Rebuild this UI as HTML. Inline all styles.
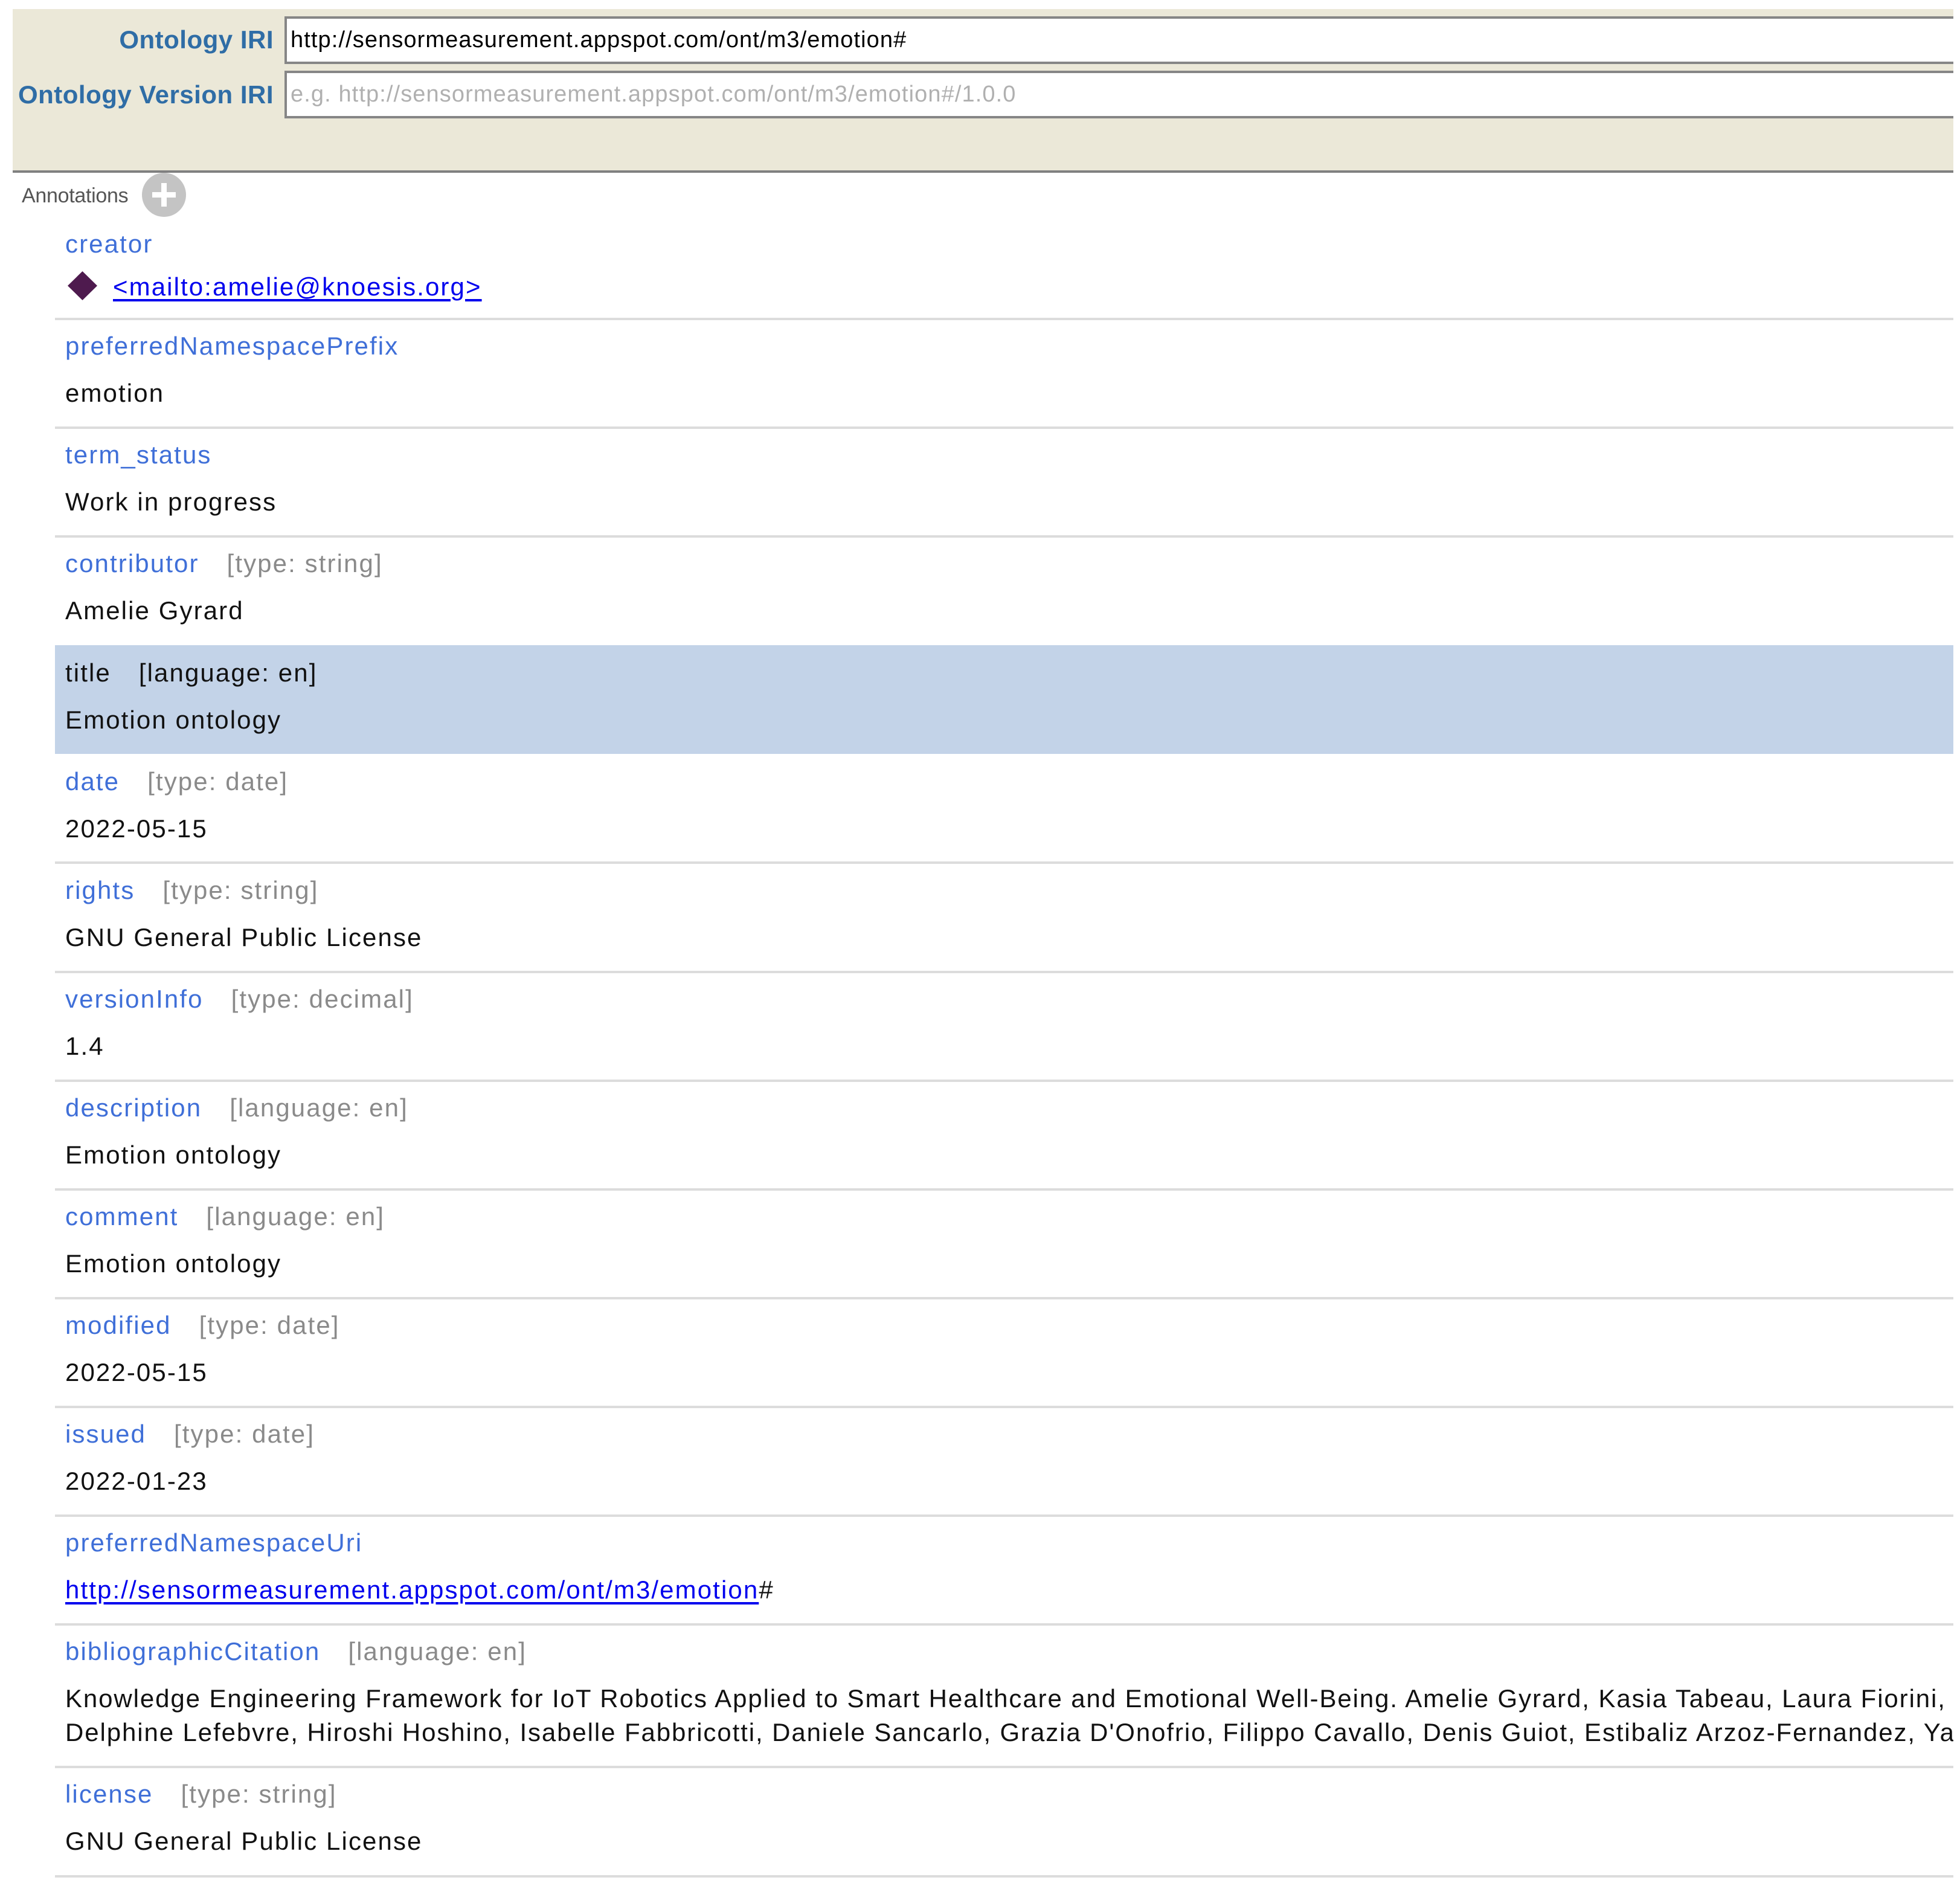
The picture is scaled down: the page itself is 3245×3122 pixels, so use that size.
<!DOCTYPE html>
<html><head><meta charset="utf-8"><style>
html,body{margin:0;padding:0;background:#fff;width:3245px;height:3122px;overflow:hidden;position:relative;font-family:"Liberation Sans",Arial,sans-serif}
.panel{position:absolute;left:21px;top:15px;width:3213px;height:267px;background:#ebe8d8;border-bottom:4px solid #808080}
.lbl{position:absolute;right:2792px;font-weight:bold;color:#2f6da6;font-size:42px;letter-spacing:0.5px;line-height:52px;white-space:nowrap}
.inp{position:absolute;left:471px;width:2763px;background:#fff;border:4px solid #868686;border-right:none;box-sizing:border-box;font-size:38px;line-height:70px;padding-left:6px;white-space:nowrap;letter-spacing:1.1px;overflow:hidden}
.ann{position:absolute;left:36px;top:304px;font-size:34px;color:#555;line-height:40px;letter-spacing:-0.3px}
.plus{position:absolute;left:235px;top:286px;width:73px;height:73px;border-radius:50%;background:#c4c4c4}
.plus:before{content:"";position:absolute;left:17px;top:32px;width:39px;height:9px;background:#fff}
.plus:after{content:"";position:absolute;left:32px;top:17px;width:9px;height:39px;background:#fff}
.wrap{position:absolute;left:91px;top:0;width:3143px;height:3122px;overflow:hidden}
.sep{position:absolute;left:0;width:3143px;height:4px;background:#dcdcdc}
.hl{position:absolute;left:0;width:3143px;top:1068px;height:180px;background:#c3d3e8}
.t{position:absolute;left:17px;font-size:42px;line-height:52px;white-space:nowrap;letter-spacing:2.1px}
.k{color:#3f6fd8}
.g{color:#8a8a8a;margin-left:46px}
.v{color:#111}
a{color:#0000ee;text-decoration:underline;text-decoration-thickness:4px;text-underline-offset:6px}
.dia{position:absolute;left:112px;top:449px;width:49px;height:48px}
</style></head><body>
<div class="panel"></div>
<div class="lbl" style="top:40px">Ontology IRI</div>
<div class="lbl" style="top:131px">Ontology Version IRI</div>
<div class="inp" style="top:27px;height:79px;color:#000">http://sensormeasurement.appspot.com/ont/m3/emotion#</div>
<div class="inp" style="top:117px;height:79px;color:#b0b0b0">e.g. http://sensormeasurement.appspot.com/ont/m3/emotion#/1.0.0</div>
<div class="ann">Annotations</div>
<div class="plus"></div>
<svg class="dia" viewBox="0 0 49 48"><polygon points="24.5,0 49,24 24.5,48 0,24" fill="#4e1a4e"/></svg>
<div class="wrap">
<div class="hl"></div>
<div class="t k" style="top:378px">creator</div>
<div class="t" style="top:449px;left:96px"><a>&lt;mailto:amelie@knoesis.org&gt;</a></div>
<div class="sep" style="top:526px"></div>
<div class="t k" style="top:547px">preferredNamespacePrefix</div>
<div class="t v" style="top:625px">emotion</div>
<div class="sep" style="top:706px"></div>
<div class="t k" style="top:727px">term_status</div>
<div class="t v" style="top:805px">Work in progress</div>
<div class="sep" style="top:886px"></div>
<div class="t k" style="top:907px">contributor<span class="g">[type: string]</span></div>
<div class="t v" style="top:985px">Amelie Gyrard</div>
<div class="t v" style="top:1088px">title<span class="v" style="margin-left:46px">[language: en]</span></div>
<div class="t v" style="top:1166px">Emotion ontology</div>
<div class="t k" style="top:1268px">date<span class="g">[type: date]</span></div>
<div class="t v" style="top:1346px">2022-05-15</div>
<div class="sep" style="top:1426px"></div>
<div class="t k" style="top:1448px">rights<span class="g">[type: string]</span></div>
<div class="t v" style="top:1526px">GNU General Public License</div>
<div class="sep" style="top:1607px"></div>
<div class="t k" style="top:1628px">versionInfo<span class="g">[type: decimal]</span></div>
<div class="t v" style="top:1706px">1.4</div>
<div class="sep" style="top:1787px"></div>
<div class="t k" style="top:1808px">description<span class="g">[language: en]</span></div>
<div class="t v" style="top:1886px">Emotion ontology</div>
<div class="sep" style="top:1967px"></div>
<div class="t k" style="top:1988px">comment<span class="g">[language: en]</span></div>
<div class="t v" style="top:2066px">Emotion ontology</div>
<div class="sep" style="top:2147px"></div>
<div class="t k" style="top:2168px">modified<span class="g">[type: date]</span></div>
<div class="t v" style="top:2246px">2022-05-15</div>
<div class="sep" style="top:2327px"></div>
<div class="t k" style="top:2348px">issued<span class="g">[type: date]</span></div>
<div class="t v" style="top:2426px">2022-01-23</div>
<div class="sep" style="top:2507px"></div>
<div class="t k" style="top:2528px">preferredNamespaceUri</div>
<div class="t v" style="top:2606px"><a>http://sensormeasurement.appspot.com/ont/m3/emotion</a>#</div>
<div class="sep" style="top:2687px"></div>
<div class="t k" style="top:2708px">bibliographicCitation<span class="g">[language: en]</span></div>
<div class="t v" style="top:2786px;letter-spacing:1.9px">Knowledge Engineering Framework for IoT Robotics Applied to Smart Healthcare and Emotional Well-Being. Amelie Gyrard, Kasia Tabeau, Laura Fiorini,</div>
<div class="t v" style="top:2842px;letter-spacing:1.9px">Delphine Lefebvre, Hiroshi Hoshino, Isabelle Fabbricotti, Daniele Sancarlo, Grazia D'Onofrio, Filippo Cavallo, Denis Guiot, Estibaliz Arzoz-Fernandez, Yasmine</div>
<div class="sep" style="top:2923px"></div>
<div class="t k" style="top:2944px">license<span class="g">[type: string]</span></div>
<div class="t v" style="top:3022px">GNU General Public License</div>
<div class="sep" style="top:3104px"></div>
</div>
</body></html>
